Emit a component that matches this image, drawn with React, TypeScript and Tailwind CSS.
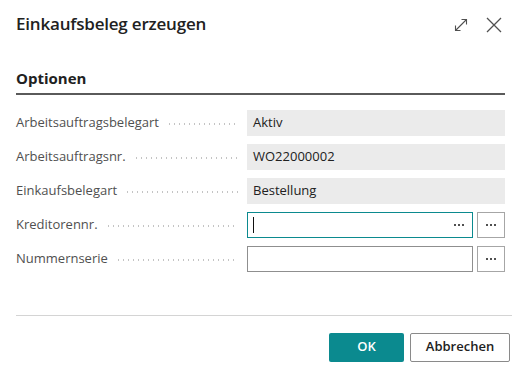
import React from 'react'

type Field = {
  label: string
  value?: string
  kind: 'readonly' | 'lookup'
  focused?: boolean
}

const fields: Field[] = [
  { label: 'Arbeitsauftragsbelegart', value: 'Aktiv', kind: 'readonly' },
  { label: 'Arbeitsauftragsnr.', value: 'WO22000002', kind: 'readonly' },
  { label: 'Einkaufsbelegart', value: 'Bestellung', kind: 'readonly' },
  { label: 'Kreditorennr.', kind: 'lookup', focused: true },
  { label: 'Nummernserie', kind: 'lookup' },
]

// three small dots used by the lookup controls
function Dots() {
  return (
    <span className="flex gap-[2px]">
      <span className="h-[2px] w-[2px] bg-[#505050]" />
      <span className="h-[2px] w-[2px] bg-[#505050]" />
      <span className="h-[2px] w-[2px] bg-[#505050]" />
    </span>
  )
}

function FieldRow({ field }: { field: Field }) {
  return (
    <div className="flex h-[26px] items-center">
      <div className="flex w-[231px] items-center pr-[9px]">
        <span className="whitespace-nowrap text-[13px] text-[#505050]">{field.label}</span>
        <span className="ml-[8px] mt-[3px] h-[2px] flex-1 bg-[radial-gradient(circle,#c4c4c4_0.9px,transparent_1.1px)] bg-[length:5px_2px] bg-repeat-x" />
      </div>
      {field.kind === 'readonly' ? (
        <div className="flex h-[26px] w-[258px] items-center bg-[#ebebeb] px-[6px] text-[13px] text-[#212121]">
          {field.value}
        </div>
      ) : (
        <div className="flex w-[258px] items-center gap-[4px]">
          <div
            className={`flex h-[26px] flex-1 items-center justify-between border pl-[5px] pr-[8px] ${
              field.focused ? 'border-[#0b8a8f]' : 'border-[#8f8f8f]'
            }`}
          >
            {field.focused ? <span className="h-[16px] w-px bg-[#111]" /> : <span />}
            {field.focused && <Dots />}
          </div>
          <div className="flex h-[26px] w-[28px] items-center justify-center border border-[#a6a6a6]">
            <Dots />
          </div>
        </div>
      )}
    </div>
  )
}

export default function App(): React.JSX.Element {
  return (
    <div
      className="flex h-[382px] w-[528px] flex-col bg-white"
      style={{ fontFamily: '"Open Sans", "Noto Sans", sans-serif' }}
    >
      {/* Header */}
      <div className="flex h-[48px] items-start justify-between px-4 pt-[11px]">
        <h1 className="text-[17px] font-semibold tracking-[-0.2px] text-[#212121]">Einkaufsbeleg erzeugen</h1>
        <div className="mr-[10px] mt-[6px] flex items-center gap-[18px] text-[#505050]">
          <svg width="14" height="14" viewBox="0 0 14 14" fill="none" stroke="currentColor" strokeWidth="1.1">
            <path d="M1.5 12.5 L12.5 1.5 M7.5 1.5 H12.5 V6.5 M1.5 7.5 V12.5 H6.5" />
          </svg>
          <svg width="16" height="16" viewBox="0 0 16 16" fill="none" stroke="currentColor" strokeWidth="1.3">
            <path d="M1 1 L15 15 M15 1 L1 15" />
          </svg>
        </div>
      </div>

      {/* Section */}
      <div className="px-4 pt-[19px]">
        <div className="mr-[7px] border-b-2 border-[#5a5a5a] pb-[3px]">
          <h2 className="text-[15px] font-bold text-[#212121]">Optionen</h2>
        </div>
        <div className="mt-[15px] flex flex-col gap-[8px]">
          {fields.map(f => (
            <FieldRow key={f.label} field={f} />
          ))}
        </div>
      </div>

      {/* Footer */}
      <div className="mx-4 mt-[43px] border-t border-[#d4d4d4]" />
      <div className="flex justify-end gap-[6px] px-4 pr-[18px] pt-[17px]">
        <button className="h-[29px] w-[75px] rounded-[2px] bg-[#0b8a8f] text-[13px] font-semibold text-white">
          OK
        </button>
        <button className="h-[29px] w-[100px] rounded-[2px] border border-[#8a8a8a] bg-white text-[13px] font-semibold text-[#212121]">
          Abbrechen
        </button>
      </div>
    </div>
  )
}
